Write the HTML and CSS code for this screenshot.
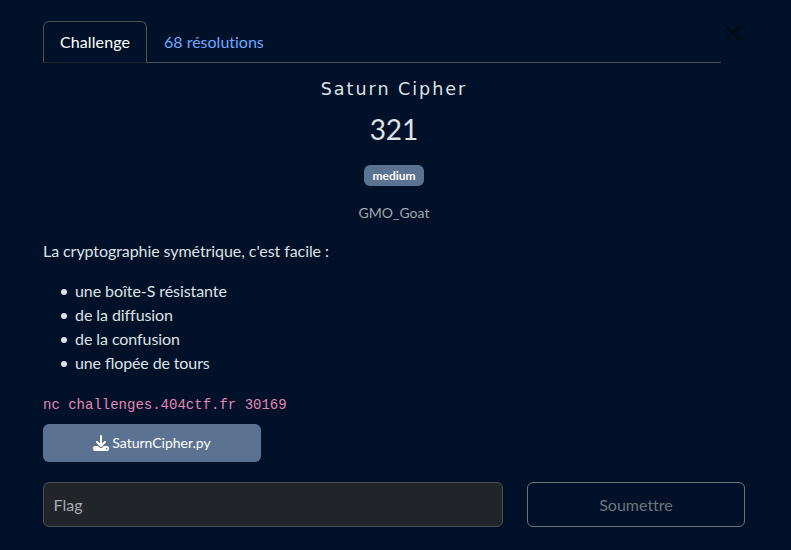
FILE: index.html
```html
<!DOCTYPE html>
<html lang="fr">
<head>
<meta charset="utf-8">
<title>Saturn Cipher</title>
<link rel="stylesheet" href="styles.css">
</head>
<body>
<main class="modal">
  <header class="head">
    <ul class="tabs">
      <li><a class="tab active">Challenge</a></li>
      <li><a class="tab">68 résolutions</a></li>
    </ul>
    <button class="close" aria-label="Close"><svg viewBox="0 0 16 16" width="16" height="16"><path d="M.293.293a1 1 0 0 1 1.414 0L8 6.586 14.293.293a1 1 0 1 1 1.414 1.414L9.414 8l6.293 6.293a1 1 0 0 1-1.414 1.414L8 9.414l-6.293 6.293a1 1 0 0 1-1.414-1.414L6.586 8 .293 1.707a1 1 0 0 1 0-1.414z"/></svg></button>
  </header>
  <h2 class="name">Saturn Cipher</h2>
  <h3 class="value">321</h3>
  <div class="tags"><span class="badge">medium</span></div>
  <div class="author">GMO_Goat</div>
  <p class="desc">La cryptographie symétrique, c'est facile :</p>
  <ul class="list">
    <li>une boîte-S résistante</li>
    <li>de la diffusion</li>
    <li>de la confusion</li>
    <li class="liga">une flopée de tours</li>
  </ul>
  <p class="cmd"><code>nc challenges.404ctf.fr 30169</code></p>
  <a class="file"><svg viewBox="0 0 512 512" width="16" height="16"><path fill="currentColor" d="M288 32c0-17.700-14.300-32-32-32s-32 14.300-32 32V274.700l-73.400-73.400c-12.500-12.500-32.800-12.500-45.300 0s-12.500 32.800 0 45.300l128 128c12.500 12.500 32.800 12.500 45.300 0l128-128c12.500-12.500 12.500-32.800 0-45.300s-32.800-12.500-45.300 0L288 274.700V32zM64 352c-35.300 0-64 28.700-64 64v32c0 35.300 28.700 64 64 64H448c35.300 0 64-28.700 64-64V416c0-35.300-28.700-64-64-64H346.500l-45.300 45.300c-25 25-65.500 25-90.500 0L165.500 352H64zm368 56a24 24 0 1 1 0 48 24 24 0 1 1 0-48z"/></svg><span>SaturnCipher.py</span></a>
  <form class="submit">
    <input class="flag" type="text" placeholder="Flag">
    <button class="send" type="button">Soumettre</button>
  </form>
</main>
</body>
</html>
```
FILE: styles.css
```css
* { box-sizing: border-box; }
body {
  margin: 0;
  background: #001129;
  color: #dee2e6;
  font: 16px/24px Lato, sans-serif;
  font-variant-ligatures: none;
}
.modal { padding: 21px 46px 0 43px; }
.head { display: flex; align-items: flex-start; height: 42px; }
.tabs {
  display: flex;
  width: 678px;
  height: 42px;
  margin: 0;
  padding: 0;
  list-style: none;
  border-bottom: 1px solid #495057;
}
.tab {
  display: block;
  height: 42px;
  padding: 8px 16px;
  border: 1px solid transparent;
  border-radius: 6px 6px 0 0;
  color: #6ea8fe;
}
.tab.active { width: 104px; letter-spacing: .1px; color: #fff; border-color: #495057 #495057 #212529; }
.close {
  display: flex;
  margin: 4px 0 0 4px;
  padding: 0;
  border: 0;
  background: none;
  opacity: .5;
}
.name {
  margin: 16px 0 0;
  text-align: center;
  font: 400 17.5px/21px "DejaVu Sans", sans-serif;
  letter-spacing: 2px;
}
.value { margin: 12px 0 0; text-align: center; font-weight: 400; font-size: 28px; line-height: 34px; }
.tags { display: flex; justify-content: center; margin-top: 19px; }
.badge {
  height: 21px;
  padding: 5px 8px 4px;
  border-radius: 6px;
  background: #5b7290;
  color: #fff;
  font-size: 12px;
  font-weight: 700;
  line-height: 12px;
}
.author { margin-top: 16px; text-align: center; color: #a0a6ae; font-size: 14px; line-height: 21px; }
.desc { margin: 16px 0; letter-spacing: -.07px; }
.list { margin: 0 0 16px; padding-left: 32px; list-style: none; letter-spacing: -.07px; }
.list li { display: flex; align-items: center; }
.list li::before {
  content: "";
  width: 6px;
  height: 6px;
  margin: 2px 8px 0 -14px;
  border-radius: 50%;
  background: #dee2e6;
}
.list .liga { letter-spacing: -.12px; font-variant-ligatures: normal; font-feature-settings: "liga" 1; }
.cmd { margin: 0; height: 24px; }
code { font: 14px "Liberation Mono", monospace; color: #e685b5; }
.file {
  display: flex;
  align-items: center;
  justify-content: center;
  gap: 3px;
  width: 218px;
  height: 38px;
  margin-top: 9px;
  border-radius: 6px;
  background: #5b7290;
  color: #fff;
  font-size: 14px;
}
.submit { display: flex; gap: 24px; margin-top: 20px; }
.flag {
  width: 460px;
  height: 45px;
  padding: 0 9.5px;
  border: 1px solid #495057;
  border-radius: 6px;
  background: #212529;
  color: #dee2e6;
  font: inherit;
}
.flag::placeholder { color: #a7acb1; opacity: 1; }
.send {
  width: 218px;
  height: 45px;
  border: 1px solid #6c757d;
  border-radius: 6px;
  background: none;
  color: #6c757d;
  font: inherit;
  font-variant-ligatures: none;
}
```
